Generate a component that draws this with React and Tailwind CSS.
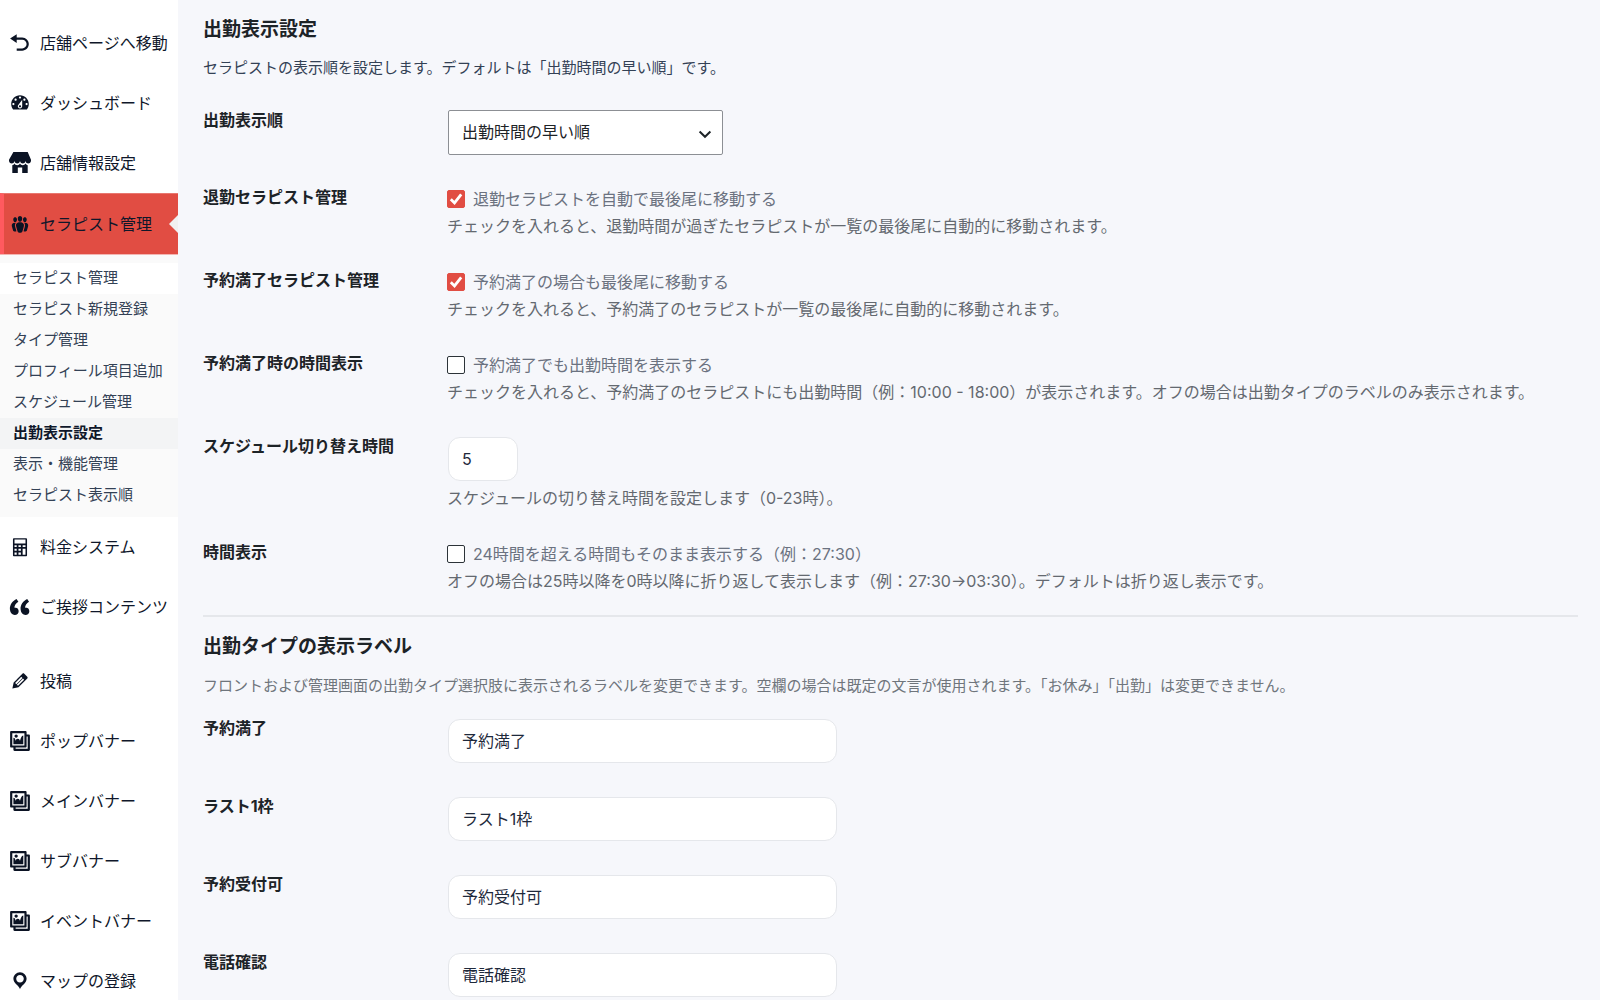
import { useState } from 'react';
import clsx from 'clsx';

const ICONS = {
    undo: 'M12 5H7V2L1 6l6 4V7h5c2.2 0 4 1.8 4 4s-1.8 4-4 4H7v2h5c3.3 0 6-2.7 6-6s-2.7-6-6-6z',
    dashboard: 'M3.76 16h12.48c1.1-1.37 1.76-3.11 1.76-5 0-4.42-3.58-8-8-8s-8 3.58-8 8c0 1.89.66 3.63 1.76 5zM10 4c.55 0 1 .45 1 1s-.45 1-1 1-1-.45-1-1 .45-1 1-1zM6 6c.55 0 1 .45 1 1s-.45 1-1 1-1-.45-1-1 .45-1 1-1zm8 0c.55 0 1 .45 1 1s-.45 1-1 1-1-.45-1-1 .45-1 1-1zm-5.37 5.55L12 7v6c0 1.1-.9 2-2 2s-2-.9-2-2c0-.57.24-1.08.63-1.45zM4 10c.55 0 1 .45 1 1s-.45 1-1 1-1-.45-1-1 .45-1 1-1zm12 0c.55 0 1 .45 1 1s-.45 1-1 1-1-.45-1-1 .45-1 1-1zm-5 3c0-.55-.45-1-1-1s-1 .45-1 1 .45 1 1 1 1-.45 1-1z',
    store: 'M1 10c.41.29.96.43 1.5.43.55 0 1.09-.14 1.5-.43.62-.46 1-1.17 1-2 0 .83.37 1.54 1 2 .41.29.96.43 1.5.43.55 0 1.09-.14 1.5-.43.62-.46 1-1.17 1-2 0 .83.37 1.54 1 2 .41.29.96.43 1.51.43.54 0 1.08-.14 1.49-.43.62-.46 1-1.17 1-2 0 .83.37 1.54 1 2 .41.29.96.43 1.5.43.55 0 1.09-.14 1.5-.43.63-.46 1-1.17 1-2V7l-3-7H4L0 7v1c0 .83.37 1.54 1 2zm2 8.99h5v-5h4v5h5v-7c-.37-.05-.72-.22-1-.43-.63-.45-1-.73-1-1.56 0 .83-.38 1.11-1 1.56-.41.3-.95.43-1.49.44-.55 0-1.1-.14-1.51-.44-.63-.45-1-.73-1-1.56 0 .83-.38 1.11-1 1.56-.41.3-.95.43-1.5.44-.54 0-1.09-.14-1.5-.44-.63-.45-1-.73-1-1.57 0 .84-.38 1.12-1 1.57-.29.21-.63.38-1 .44v6.99z',
    groups: 'M8.03 4.46c-.29 1.28.55 3.46 1.97 3.46 1.41 0 2.25-2.18 1.96-3.46-.22-.98-1.08-1.63-1.96-1.63-.89 0-1.74.65-1.97 1.63zm-4.13.9c-.25 1.08.47 2.93 1.67 2.93s1.92-1.85 1.67-2.93c-.19-.83-.92-1.39-1.67-1.39s-1.48.56-1.67 1.39zm8.86 0c-.25 1.08.47 2.93 1.66 2.93 1.2 0 1.92-1.85 1.67-2.93-.19-.83-.92-1.39-1.67-1.39-.74 0-1.47.56-1.66 1.39zm-.59 11.43l1.25-4.3C14.2 10 12.71 8.47 10 8.47c-2.72 0-4.21 1.53-3.44 4.02l1.26 4.3C8.05 17.51 9 18 10 18c.98 0 1.94-.49 2.17-1.21zm-6.1-7.63c-.49.67-.96 1.83-.42 3.59l1.12 3.79c-.34.2-.77.31-1.2.31-.85 0-1.65-.41-1.85-1.03l-1.07-3.65c-.65-2.11.61-3.4 2.92-3.4.27 0 .54.02.79.06-.1.1-.2.22-.29.33zm8.35-.39c2.31 0 3.58 1.29 2.92 3.4l-1.07 3.65c-.2.62-1 1.03-1.85 1.03-.43 0-.86-.11-1.2-.31l1.11-3.77c.55-1.78.08-2.94-.42-3.61-.08-.11-.18-.23-.28-.33.25-.04.51-.06.79-.06z',
    calculator: 'M4.6 2h10.8c.6 0 1 .4 1 1v14.4c0 .6-.4 1-1 1H4.6c-.6 0-1-.4-1-1V3c0-.6.4-1 1-1zM5 3.2v3.6h10V3.2zM5 8.3v1.8h2V8.3zm3.6 0v1.8h2.2V8.3zm3.8 0v1.8H15V8.3zM5 11.5v1.8h2v-1.8zm3.6 0v1.8h2.2v-1.8zm3.8 0V17H15v-5.500zM5 14.900V17h2v-2.100zm3.600 0V17h2.200v-2.100z',
    quote: 'M9.49 13.22c0-.74-.2-1.38-.61-1.9-.62-.78-1.83-.88-2.53-.72-.29-1.65 1.11-3.75 2.92-4.65L7.88 4c-2.73 1.3-5.42 4.28-4.96 8.05C3.21 14.43 4.59 16 6.54 16c.85 0 1.56-.25 2.12-.75s.83-1.18.83-2.03zm8.05 0c0-.74-.2-1.38-.61-1.9-.63-.78-1.83-.88-2.53-.72-.29-1.65 1.11-3.75 2.92-4.65L15.93 4c-2.73 1.3-5.41 4.28-4.95 8.05.29 2.38 1.66 3.95 3.61 3.95.85 0 1.56-.25 2.12-.75s.83-1.18.83-2.03z',
    edit: 'M13.89 3.39l2.71 2.72c.46.46.42 1.24.03 1.64l-8.01 8.02-5.56 1.16 1.16-5.58s7.6-7.63 7.99-8.03c.39-.39 1.22-.39 1.68.07zm-2.73 2.79l-5.59 5.61 1.11 1.11 5.54-5.65zm-2.97 8.23l5.58-5.6-1.07-1.08-5.59 5.6z',
    gallery: 'M16 4h1.96c.57 0 1.04.47 1.04 1.04v12.92c0 .57-.47 1.04-1.04 1.04H5.04C4.47 19 4 18.53 4 17.96V16H2.04C1.47 16 1 15.53 1 14.96V2.04C1 1.47 1.47 1 2.04 1h12.92c.57 0 1.04.47 1.04 1.04V4zM3 14h11V3H3v11zm5-8.5C8 4.67 7.33 4 6.5 4S5 4.67 5 5.5 5.67 7 6.5 7 8 6.33 8 5.5zm2 4.5s1-5 3-5v8H4V7c2 0 2 3 2 3s.33-2 2-2 2 2 2 2zm7 7V6h-1v8.96c0 .57-.47 1.04-1.04 1.04H6v1h11z',
    location: 'M10 2C6.69 2 4 4.69 4 8c0 2.02 1.17 3.71 2.53 4.89.43.37 1.18.96 1.85 1.83.74.97 1.41 2.01 1.62 2.71.21-.7.88-1.74 1.62-2.71.67-.87 1.42-1.46 1.85-1.83C14.83 11.71 16 10.02 16 8c0-3.31-2.69-6-6-6zm0 2.56c1.9 0 3.44 1.54 3.44 3.44S11.9 11.44 10 11.44 6.56 9.9 6.56 8 8.1 4.56 10 4.56z',
};

const menuTop = [
    { label: '店舗ページへ移動', icon: 'undo' },
    { label: 'ダッシュボード', icon: 'dashboard' },
    { label: '店舗情報設定', icon: 'store' },
    { label: 'セラピスト管理', icon: 'groups', active: true },
];

const submenu = [
    'セラピスト管理',
    'セラピスト新規登録',
    'タイプ管理',
    'プロフィール項目追加',
    'スケジュール管理',
    '出勤表示設定',
    '表示・機能管理',
    'セラピスト表示順',
];

const menuMiddle = [
    { label: '料金システム', icon: 'calculator' },
    { label: 'ご挨拶コンテンツ', icon: 'quote' },
];

const menuBottom = [
    { label: '投稿', icon: 'edit' },
    { label: 'ポップバナー', icon: 'gallery' },
    { label: 'メインバナー', icon: 'gallery' },
    { label: 'サブバナー', icon: 'gallery' },
    { label: 'イベントバナー', icon: 'gallery' },
    { label: 'マップの登録', icon: 'location' },
];

const typeLabels = [
    { id: 'full', label: '予約満了' },
    { id: 'last', label: 'ラスト1枠' },
    { id: 'open', label: '予約受付可' },
    { id: 'tel', label: '電話確認' },
];

function MenuItem({ label, icon, active }) {
    return (
        <a
            href="#"
            className={clsx(
                'relative flex items-center gap-[9px] text-base whitespace-nowrap text-[#0f172a]',
                active ? 'h-[61px] border-t border-l-4 border-t-[#e8776f] border-l-[#ff5a5f] bg-[#e14d43] pl-[5px]' : 'h-[60px] pl-[9px]'
            )}
        >
            <svg
                viewBox={icon === 'quote' ? '2.2 1.7 16.6 16.6' : '0 0 20 20'}
                className="size-[22px] shrink-0 fill-[#0b1324]"
                fillRule="evenodd"
            >
                <path d={ICONS[icon]} />
            </svg>
            <span>{label}</span>
            {active && (
                <span className="absolute top-1/2 right-0 -mt-[9px] border-y-[9px] border-r-[9px] border-y-transparent border-r-[#f1f1f1]" />
            )}
        </a>
    );
}

function Sidebar() {
    return (
        <nav className="w-[178px] shrink-0 bg-white pt-[13px]">
            {menuTop.map(item => <MenuItem key={item.icon} {...item} />)}
            <div className="border-t border-[#f3b5b1] bg-[#fafafa] pt-2 pb-[6px]">
                {submenu.map((label, i) => (
                    <a
                        key={label}
                        href="#"
                        className={clsx(
                            'flex h-[31px] items-center pl-[13px] text-[15px] whitespace-nowrap',
                            i === 0 && 'bg-white',
                            label === '出勤表示設定' ? 'bg-[#f3f4f5] font-bold text-[#0f172a]' : 'text-[#334155]'
                        )}
                    >
                        {label}
                    </a>
                ))}
            </div>
            {menuMiddle.map(item => <MenuItem key={item.label} {...item} />)}
            <div className="h-[14px]" />
            {menuBottom.map(item => <MenuItem key={item.label} {...item} />)}
        </nav>
    );
}

function Row({ label, htmlFor, children }) {
    return (
        <div className="grid grid-cols-[244px_1fr]">
            <label htmlFor={htmlFor} className="text-base leading-6 font-bold text-[#1d2327]">{label}</label>
            <div>{children}</div>
        </div>
    );
}

function Description({ children }) {
    return <p className="text-base leading-6 text-[#646970]">{children}</p>;
}

function CheckRow({ id, title, text, description, defaultChecked }) {
    const [checked, setChecked] = useState(defaultChecked);
    return (
        <Row label={title} htmlFor={id}>
            <div className="mb-[3px] flex items-center gap-2 pt-[2px]">
                <span className="relative flex size-[18px]">
                    <input
                        id={id}
                        type="checkbox"
                        checked={checked}
                        onChange={e => setChecked(e.target.checked)}
                        className="size-[18px] appearance-none rounded-[2px] border border-[#2c3338] bg-white checked:border-[#e14d43] checked:bg-[#e14d43]"
                    />
                    {checked && (
                        <svg viewBox="0 0 18 18" className="pointer-events-none absolute inset-0 fill-none stroke-white" strokeWidth="2.8">
                            <path d="M3.8 9.2l3.700 3.700 6.700-8.600" />
                        </svg>
                    )}
                </span>
                <label htmlFor={id} className="text-base leading-6 text-[#6b7280]">{text}</label>
            </div>
            <Description>{description}</Description>
        </Row>
    );
}

export default function App() {
    return (
        <div className="flex h-screen overflow-hidden bg-[#f6f7fb] font-[Inter,'Noto_Sans_CJK_JP',sans-serif]" lang="ja">
            <Sidebar />
            <main className="min-w-0 flex-1 pt-4 pr-[22px] pl-[25px]">
                <h1 className="text-[19px] leading-7 font-bold text-[#1d2327]">出勤表示設定</h1>
                <p className="mt-3 text-[15px] leading-6 text-[#334155]">
                    セラピストの表示順を設定します。デフォルトは「出勤時間の早い順」です。
                </p>

                <div className="mt-7 flex flex-col gap-[30px]">
                    <Row label="出勤表示順" htmlFor="order">
                        <div className="relative mt-[2px] ml-px w-[275px]">
                            <select id="order" className="h-[45px] w-full appearance-none rounded-[2px] border border-[#8c8f94] bg-white pr-10 pb-[2px] pl-[13px] text-base text-[#1d2327]">
                                <option>出勤時間の早い順</option>
                            </select>
                            <svg viewBox="0 0 20 20" className="pointer-events-none absolute top-[14px] right-2 size-5 fill-none stroke-[#1d2327]" strokeWidth="2">
                                <path d="M4.6 7.5L10 12.800l5.400-5.300" />
                            </svg>
                        </div>
                    </Row>
                    <CheckRow
                        id="off-last"
                        title="退勤セラピスト管理"
                        text="退勤セラピストを自動で最後尾に移動する"
                        description="チェックを入れると、退勤時間が過ぎたセラピストが一覧の最後尾に自動的に移動されます。"
                        defaultChecked={true}
                    />
                    <CheckRow
                        id="full-last"
                        title="予約満了セラピスト管理"
                        text="予約満了の場合も最後尾に移動する"
                        description="チェックを入れると、予約満了のセラピストが一覧の最後尾に自動的に移動されます。"
                        defaultChecked={true}
                    />
                    <CheckRow
                        id="full-time"
                        title="予約満了時の時間表示"
                        text="予約満了でも出勤時間を表示する"
                        description="チェックを入れると、予約満了のセラピストにも出勤時間（例：10:00 - 18:00）が表示されます。オフの場合は出勤タイプのラベルのみ表示されます。"
                        defaultChecked={false}
                    />
                    <Row label="スケジュール切り替え時間" htmlFor="switch-hour">
                        <input
                            id="switch-hour"
                            type="text"
                            inputMode="numeric"
                            defaultValue="5"
                            className="mt-[3px] mb-[5px] ml-px block h-11 w-[70px] rounded-xl border border-[#e5e7eb] bg-white px-[13px] text-base text-[#1e293b]"
                        />
                        <Description>スケジュールの切り替え時間を設定します（0-23時）。</Description>
                    </Row>
                    <CheckRow
                        id="over24"
                        title="時間表示"
                        text="24時間を超える時間もそのまま表示する（例：27:30）"
                        description="オフの場合は25時以降を0時以降に折り返して表示します（例：27:30→03:30）。デフォルトは折り返し表示です。"
                        defaultChecked={false}
                    />
                </div>

                <hr className="mt-[22px] border-t-2 border-[#e5e7eb]" />

                <h2 className="mt-4 text-[19px] leading-7 font-bold text-[#1d2327]">出勤タイプの表示ラベル</h2>
                <p className="mt-[13px] text-[15px] leading-6 text-[#6f757c]">
                    フロントおよび管理画面の出勤タイプ選択肢に表示されるラベルを変更できます。空欄の場合は既定の文言が使用されます。「お休み」「出勤」は変更できません。
                </p>

                <div className="mt-[18px] flex flex-col gap-[31px]">
                    {typeLabels.map(t => (
                        <Row key={t.id} label={t.label} htmlFor={t.id}>
                            <input
                                id={t.id}
                                type="text"
                                defaultValue={t.label}
                                className="mt-[3px] ml-px block h-11 w-[389px] rounded-xl border border-[#e5e7eb] bg-white px-[13px] pb-[2px] text-base text-[#1e293b]"
                            />
                        </Row>
                    ))}
                </div>
            </main>
        </div>
    );
}
